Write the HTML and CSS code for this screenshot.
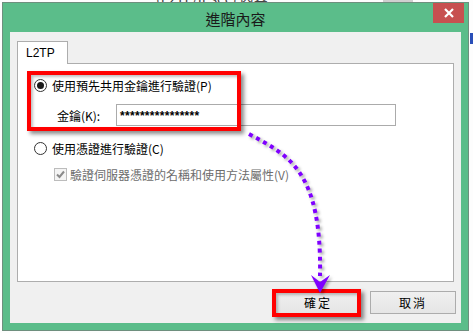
FILE: index.html
```html
<!DOCTYPE html>
<html lang="zh-Hant">
<head>
<meta charset="utf-8">
<title>進階內容</title>
<link rel="stylesheet" href="styles.css">
</head>
<body>
<div class="desk">
  <div class="bg-text">(L2TP/IPsec) 內容</div>
  <div class="bg-block"></div>
  <div class="bg-blue"></div>

  <div class="window">
    <div class="titlebar">
      <span class="title">進階內容</span>
      <span class="close">
        <svg width="12" height="12" viewBox="0 0 12 12"><path d="M2 2 L10 10 M10 2 L2 10" stroke="#fff" stroke-width="2.2" fill="none"/></svg>
      </span>
    </div>
    <div class="content">
      <div class="tabs"><div class="tab">L2TP</div></div>
      <div class="panel">
        <div class="row">
          <span class="radio checked"></span>
          <span class="label">使用預先共用金鑰進行驗證(P)</span>
        </div>
        <div class="row key-row">
          <span class="key-label">金鑰(K):</span>
          <div class="input">****************</div>
        </div>
        <div class="row row-cert">
          <span class="radio"></span>
          <span class="label">使用憑證進行驗證(C)</span>
        </div>
        <div class="row check-row">
          <span class="checkbox">
            <svg width="11" height="11" viewBox="0 0 11 11"><path d="M2 5.5 L4.5 8 L9 2.5" stroke="#8a8a8a" stroke-width="2" fill="none"/></svg>
          </span>
          <span class="label disabled">驗證伺服器憑證的名稱和使用方法屬性(V)</span>
        </div>
      </div>
      <div class="buttons">
        <div class="btn">確定</div>
        <div class="btn">取消</div>
      </div>
    </div>
  </div>

  <div class="mark mark-key"></div>
  <div class="mark mark-ok"></div>
  <svg class="arrow" width="473" height="333" viewBox="0 0 473 333">
    <path d="M249 134 C 288 155 322 170 320 276" stroke="#7f00ff" stroke-width="4" stroke-dasharray="4 4" fill="none"/>
    <polygon points="311,275 320,282 330,275 320,293" fill="#7f00ff"/>
  </svg>
</div>
</body>
</html>
```
FILE: styles.css
```css
* { box-sizing: border-box; }
html, body { margin: 0; padding: 0; }
body {
  background: #fff;
  font-family: "Liberation Sans", "Noto Sans CJK TC", sans-serif;
  font-size: 12px;
  color: #000;
}
.desk {
  position: relative;
  width: 473px;
  height: 333px;
  overflow: hidden;
  background: #fdfdfd;
}
.bg-text {
  position: absolute;
  left: 156px;
  top: -12px;
  font-size: 14px;
  color: #444;
  font-family: "Noto Sans CJK TC", sans-serif;
}
.bg-block {
  position: absolute;
  left: 383px;
  top: 0;
  width: 30px;
  height: 3px;
  background: #cfcfcf;
}
.bg-blue {
  position: absolute;
  left: 470px;
  top: 33px;
  width: 3px;
  height: 11px;
  background: #2a4fb8;
}
.window {
  position: absolute;
  left: 2px;
  top: 2px;
  width: 467px;
  height: 329px;
  border: 1px solid #6e8f7e;
  background: #5bbd8a;
  padding: 0 7px 7px 7px;
  display: flex;
  flex-direction: column;
}
.titlebar {
  position: relative;
  height: 29px;
  display: flex;
  align-items: center;
  justify-content: center;
  flex: none;
}
.title {
  font-family: "Noto Sans CJK TC", sans-serif;
  font-size: 15px;
  color: #1a1a1a;
  margin-top: 1px;
}
.close {
  position: absolute;
  top: 0;
  right: -3px;
  width: 31px;
  height: 20px;
  background: #c75050;
  display: flex;
  align-items: center;
  justify-content: center;
}
.content {
  flex: 1;
  background: #f0f0f0;
  padding: 9px 7px 9px 7px;
  display: flex;
  flex-direction: column;
}
.tabs { display: flex; height: 23px; flex: none; position: relative; z-index: 1; }
.tab {
  width: 51px;
  height: 23px;
  border: 1px solid #adadad;
  border-bottom: none;
  background: #fff;
  padding: 3px 0 0 8px;
  font-size: 12px;
  line-height: 16px;
}
.panel {
  margin-top: -1px;
  height: 219px;
  border: 1px solid #adadad;
  background: #fff;
  padding: 13px 0 0 16px;
  display: flex;
  flex-direction: column;
  flex: none;
}
.row {
  display: flex;
  align-items: center;
  height: 16px;
  font-family: "Noto Sans CJK TC", sans-serif;
  font-size: 12px;
}
.label { margin-left: 5px; color: #000; }
.label.disabled { color: #6d6d6d; margin-left: 3px; }
.radio {
  width: 13px;
  height: 13px;
  border: 1px solid #333;
  border-radius: 50%;
  background: #fff;
  display: flex;
  align-items: center;
  justify-content: center;
  flex: none;
}
.radio.checked::after {
  content: "";
  width: 7px;
  height: 7px;
  border-radius: 50%;
  background: #1a1a1a;
}
.key-row {
  margin-top: 11px;
  height: 22px;
  padding-left: 23px;
}
.key-label { width: 59px; }
.input {
  width: 280px;
  height: 22px;
  border: 1px solid #ababab;
  background: #fff;
  padding: 3px 0 0 3px;
  font-family: "Liberation Sans", sans-serif;
  font-size: 12px;
  font-weight: bold;
  line-height: 16px;
  letter-spacing: 0.3px;
}
.row-cert { margin-top: 14px; }
.check-row { margin-top: 10px; padding-left: 20px; }
.checkbox {
  width: 13px;
  height: 13px;
  border: 1px solid #bcbcbc;
  background: #f4f4f4;
  display: flex;
  align-items: center;
  justify-content: center;
  flex: none;
}
.buttons {
  margin-top: 9px;
  margin-right: -2px;
  display: flex;
  justify-content: flex-end;
  gap: 9px;
}
.btn {
  width: 86px;
  height: 23px;
  border: 1px solid #acacac;
  background: linear-gradient(#f0f0f0, #e5e5e5);
  display: flex;
  align-items: center;
  justify-content: center;
  font-family: "Noto Sans CJK TC", sans-serif;
  font-size: 12px;
  letter-spacing: 2px;
}
.mark {
  position: absolute;
  border: 4px solid #ff0000;
  box-shadow: 3px 3px 4px rgba(0,0,0,0.45), inset 2px 2px 3px rgba(0,0,0,0.25);
}
.mark-key { left: 27px; top: 71px; width: 214px; height: 60px; }
.mark-ok { left: 272px; top: 289px; width: 89px; height: 28px; }
.arrow {
  position: absolute;
  left: 0;
  top: 0;
  pointer-events: none;
  filter: drop-shadow(2px 2px 1.5px rgba(0,0,0,0.35));
}
```
